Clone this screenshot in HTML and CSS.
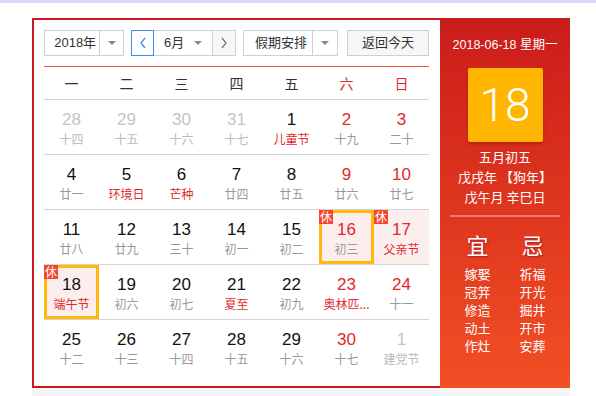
FILE: index.html
```html
<!DOCTYPE html>
<html lang="zh">
<head>
<meta charset="utf-8">
<title>万年历</title>
<link rel="stylesheet" href="styles.css">
</head>
<body>
<div class="topband"></div>
<div class="page">
  <div class="cal">
    <div class="main">
      <div class="controls">
        <div class="sel sel-year"><span class="sel-text">2018年</span><span class="sel-arrow"><i class="tri"></i></span></div>
        <div class="month-group">
          <div class="nav nav-prev"><svg width="8" height="12" viewBox="0 0 8 12"><path d="M6 1 L2 6 L6 11" fill="none" stroke="#3a8ee6" stroke-width="1.3"/></svg></div>
          <div class="sel sel-month"><span class="sel-text">6月</span><i class="tri"></i></div>
          <div class="nav nav-next"><svg width="8" height="12" viewBox="0 0 8 12"><path d="M2 1 L6 6 L2 11" fill="none" stroke="#777" stroke-width="1.3"/></svg></div>
        </div>
        <div class="sel sel-holiday"><span class="sel-text">假期安排</span><span class="sel-arrow"><i class="tri"></i></span></div>
        <div class="btn-today">返回今天</div>
      </div>
      <div class="weekhead">
        <span>一</span><span>二</span><span>三</span><span>四</span><span>五</span><span class="red">六</span><span class="red">日</span>
      </div>
      <div class="days">
        <div class="day other"><b>28</b><em>十四</em></div>
        <div class="day other"><b>29</b><em>十五</em></div>
        <div class="day other"><b>30</b><em>十六</em></div>
        <div class="day other"><b>31</b><em>十七</em></div>
        <div class="day"><b>1</b><em class="fest">儿童节</em></div>
        <div class="day weekend"><b>2</b><em>十九</em></div>
        <div class="day weekend"><b>3</b><em>二十</em></div>

        <div class="day"><b>4</b><em>廿一</em></div>
        <div class="day"><b>5</b><em class="fest">环境日</em></div>
        <div class="day"><b>6</b><em class="fest">芒种</em></div>
        <div class="day"><b>7</b><em>廿四</em></div>
        <div class="day"><b>8</b><em>廿五</em></div>
        <div class="day weekend"><b>9</b><em>廿六</em></div>
        <div class="day weekend"><b>10</b><em>廿七</em></div>

        <div class="day"><b>11</b><em>廿八</em></div>
        <div class="day"><b>12</b><em>廿九</em></div>
        <div class="day"><b>13</b><em>三十</em></div>
        <div class="day"><b>14</b><em>初一</em></div>
        <div class="day"><b>15</b><em>初二</em></div>
        <div class="day weekend rest selected"><span class="badge">休</span><b>16</b><em>初三</em></div>
        <div class="day weekend rest"><span class="badge">休</span><b>17</b><em class="fest">父亲节</em></div>

        <div class="day rest selected"><span class="badge">休</span><b>18</b><em class="fest">端午节</em></div>
        <div class="day"><b>19</b><em>初六</em></div>
        <div class="day"><b>20</b><em>初七</em></div>
        <div class="day"><b>21</b><em class="fest">夏至</em></div>
        <div class="day"><b>22</b><em>初九</em></div>
        <div class="day weekend"><b>23</b><em class="fest">奥林匹...</em></div>
        <div class="day weekend"><b>24</b><em>十一</em></div>

        <div class="day"><b>25</b><em>十二</em></div>
        <div class="day"><b>26</b><em>十三</em></div>
        <div class="day"><b>27</b><em>十四</em></div>
        <div class="day"><b>28</b><em>十五</em></div>
        <div class="day"><b>29</b><em>十六</em></div>
        <div class="day weekend"><b>30</b><em>十七</em></div>
        <div class="day other"><b>1</b><em>建党节</em></div>
      </div>
    </div>
    <div class="panel">
      <div class="p-date">2018-06-18 星期一</div>
      <div class="p-big">18</div>
      <div class="p-lunar">
        <div>五月初五</div>
        <div>戊戌年 【狗年】</div>
        <div>戊午月 辛巳日</div>
      </div>
      <div class="p-divider"></div>
      <div class="p-yiji">
        <div class="p-col">
          <div class="p-head">宜</div>
          <div>嫁娶</div><div>冠笄</div><div>修造</div><div>动土</div><div>作灶</div>
        </div>
        <div class="p-col">
          <div class="p-head">忌</div>
          <div>祈福</div><div>开光</div><div>掘井</div><div>开市</div><div>安葬</div>
        </div>
      </div>
    </div>
  </div>
  <div class="footer-strip"></div>
</div>
</body>
</html>
```
FILE: styles.css
```css
* { box-sizing: border-box; }
html, body { margin: 0; padding: 0; background: #fff; }
body {
  font-family: "Liberation Sans", "Noto Sans CJK SC", sans-serif;
  color: #333;
  font-size: 13px;
  overflow: hidden;
}
.topband { height: 3px; background: #dcd8fa; }
.page { padding: 15px 0 0 32px; width: 570px; }
.cal { display: flex; height: 370px; }
.main {
  width: 408px;
  border: 2px solid #c9191c;
  border-right: none;
  padding: 10px 0 0 10px;
}
.controls { display: flex; height: 26px; align-items: stretch; }
.sel {
  display: flex;
  border: 1px solid #cfcfcf;
  background: #fff;
  font-size: 13px;
  color: #333;
  align-items: center;
}
.sel-text { line-height: 24px; }
.sel-arrow {
  display: flex;
  align-items: center;
  justify-content: center;
  border-left: 1px solid #cfcfcf;
  height: 100%;
}
.tri {
  display: block;
  width: 0; height: 0;
  border-left: 4px solid transparent;
  border-right: 4px solid transparent;
  border-top: 4px solid #888;
}
.sel-year { width: 80px; }
.sel-year .sel-text { width: 55px; text-align: center; padding-left: 6px; }
.sel-year .sel-arrow { width: 24px; }
.month-group { display: flex; margin-left: 7px; }
.nav {
  width: 23px;
  display: flex;
  align-items: center;
  justify-content: center;
  border: 1px solid #cfcfcf;
  background: #f7f7f7;
}
.nav-prev { border-color: #3a8ee6; background: #fff; }
.nav-next { border-left: none; }
.sel-month { width: 59px; border-left: none; padding: 0 10px 0 10px; justify-content: space-between; }
.sel-holiday { width: 95px; margin-left: 7px; }
.sel-holiday .sel-text { width: 69px; padding-left: 11px; }
.sel-holiday .sel-arrow { width: 25px; }
.btn-today {
  width: 82px;
  margin-left: 9px;
  border: 1px solid #cfcfcf;
  background: #f7f7f7;
  text-align: center;
  line-height: 24px;
  font-size: 13px;
  color: #333;
}
.weekhead {
  margin-top: 10px;
  width: 385px;
  display: grid;
  grid-template-columns: repeat(7, 55px);
  border-top: 1px solid #f2564b;
  height: 33px;
  align-items: center;
  font-size: 14px;
  color: #333;
  font-family: "Noto Sans CJK SC", sans-serif;
}
.weekhead span { text-align: center; line-height: 30px; }
.weekhead .red { color: #e0282d; }
.days {
  width: 385px;
  display: grid;
  grid-template-columns: repeat(7, 55px);
}
.day {
  position: relative;
  height: 55px;
  border-top: 1px solid #d4d4d4;
  padding-top: 10px;
  text-align: center;
}
.day b {
  display: block;
  font-weight: normal;
  font-size: 17px;
  line-height: 20px;
  color: #111;
  font-family: "Liberation Sans", sans-serif;
}
.day em {
  display: block;
  font-style: normal;
  font-size: 12px;
  line-height: 18px;
  color: #999;
  font-family: "Noto Sans CJK SC", sans-serif;
}
.day em.fest { color: #e0282d; }
.day.weekend b { color: #e0282d; }
.day.other b { color: #c4c4c4; }
.day.other em { color: #bbb; }
.day.rest { background: #fdeeee; }
.day.selected { box-shadow: inset 0 0 0 3px #ffb80d; }
.badge {
  position: absolute;
  left: 0;
  top: 0;
  width: 14px;
  height: 14px;
  background: #f4462f;
  color: #fff;
  font-size: 12px;
  line-height: 14px;
  text-align: center;
  font-family: "Noto Sans CJK SC", sans-serif;
}
.panel {
  width: 130px;
  background: linear-gradient(to bottom, #ca1c1a, #f24f24);
  color: #fff;
  text-align: center;
  padding-top: 17px;
}
.p-date { font-size: 12.5px; line-height: 20px; }
.p-big {
  width: 75px;
  height: 74px;
  margin: 13px auto 0;
  background: #ffb600;
  box-shadow: 0 2px 3px rgba(120, 0, 0, .35);
  border-radius: 2px;
  font-family: "Roboto", "Liberation Sans", sans-serif;
  font-weight: 300;
  font-size: 46px;
  line-height: 74px;
  color: #fff;
}
.p-lunar {
  margin-top: 5px;
  font-family: "Noto Sans CJK SC", sans-serif;
  font-size: 13px;
  line-height: 20px;
}
.p-divider {
  height: 2px;
  margin: 8px 10px 0;
  background: rgba(255, 255, 255, .35);
}
.p-yiji {
  display: flex;
  justify-content: center;
  gap: 29px;
  margin-top: 15px;
  font-family: "Noto Sans CJK SC", sans-serif;
  font-size: 13px;
  line-height: 18px;
}
.p-col { width: 26px; }
.p-head {
  font-size: 22px;
  line-height: 24px;
  margin-bottom: 9px;
  text-shadow: 1px 1px 2px rgba(120, 0, 40, .6);
}
.footer-strip { height: 8px; background: #f5f5f5; width: 538px; }
```
